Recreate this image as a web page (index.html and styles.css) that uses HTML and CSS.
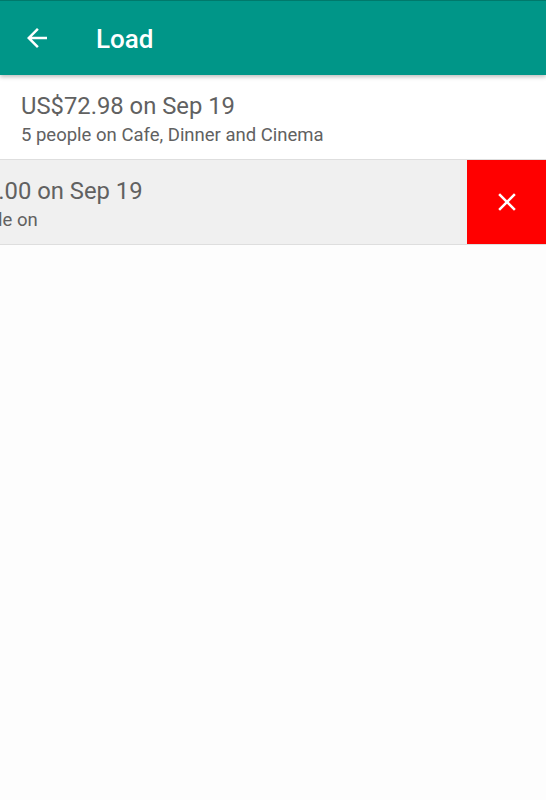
FILE: index.html
```html
<!DOCTYPE html>
<html>
<head>
<meta charset="utf-8">
<link rel="stylesheet" href="styles.css">
</head>
<body>
<div class="app">
  <header class="toolbar">
    <svg class="back" viewBox="0 0 24 24"><path d="M20 11H7.83l5.59-5.59L12 4l-8 8 8 8 1.41-1.41L7.83 13H20v-2z" fill="#fff"/></svg>
    <h1 class="title">Load</h1>
  </header>
  <main class="list">
    <div class="row">
      <div class="text">
        <div class="primary">US$72.98 on Sep 19</div>
        <div class="secondary">5 people on Cafe, Dinner and Cinema</div>
      </div>
    </div>
    <div class="row swiped">
      <div class="clip">
        <div class="text shifted">
          <div class="primary">US$5.00 on Sep 19</div>
          <div class="secondary">2 people on</div>
        </div>
      </div>
      <div class="delete">
        <svg class="close" viewBox="0 0 24 24"><path d="M19 6.41L17.59 5 12 10.59 6.41 5 5 6.41 10.59 12 5 17.59 6.41 19 12 13.41 17.59 19 19 17.59 13.41 12z" fill="#fff"/></svg>
      </div>
    </div>
  </main>
</div>
</body>
</html>
```

FILE: styles.css
```css
html, body {
  margin: 0;
  padding: 0;
  background: #fdfdfd;
  font-family: Roboto, "Noto Sans", sans-serif;
}
.app {
  width: 546px;
  height: 800px;
  background: #fdfdfd;
  overflow: hidden;
}
.toolbar {
  height: 74px;
  background: #009688;
  border-top: 1px solid #00796b;
  display: flex;
  align-items: center;
  padding-left: 22px;
  box-shadow: 0 2px 4px rgba(0,0,0,0.25);
  position: relative;
  z-index: 1;
}
.back {
  width: 30px;
  height: 30px;
}
.title {
  margin: 2px 0 0 44px;
  color: #fff;
  font-size: 26px;
  font-weight: 500;
  line-height: 30px;
}
.list {
  display: flex;
  flex-direction: column;
}
.row {
  height: 84px;
  background: #fff;
  border-bottom: 1px solid #dedede;
  display: flex;
  align-items: stretch;
}
.text {
  padding: 3px 0 0 21px;
  display: flex;
  flex-direction: column;
  justify-content: center;
  white-space: nowrap;
}
.primary {
  font-size: 23.8px;
  color: #616161;
  line-height: 30px;
}
.secondary {
  font-size: 18.5px;
  color: #616161;
  line-height: 24px;
  margin-top: 2px;
}
.swiped {
  background: #f0f0f0;
}
.clip {
  flex: 1;
  overflow: hidden;
  display: flex;
}
.shifted {
  transform: translateX(-79px);
}
.delete {
  width: 79px;
  background: #ff0000;
  display: flex;
  align-items: center;
  justify-content: center;
}
.close {
  width: 30px;
  height: 30px;
}
```
